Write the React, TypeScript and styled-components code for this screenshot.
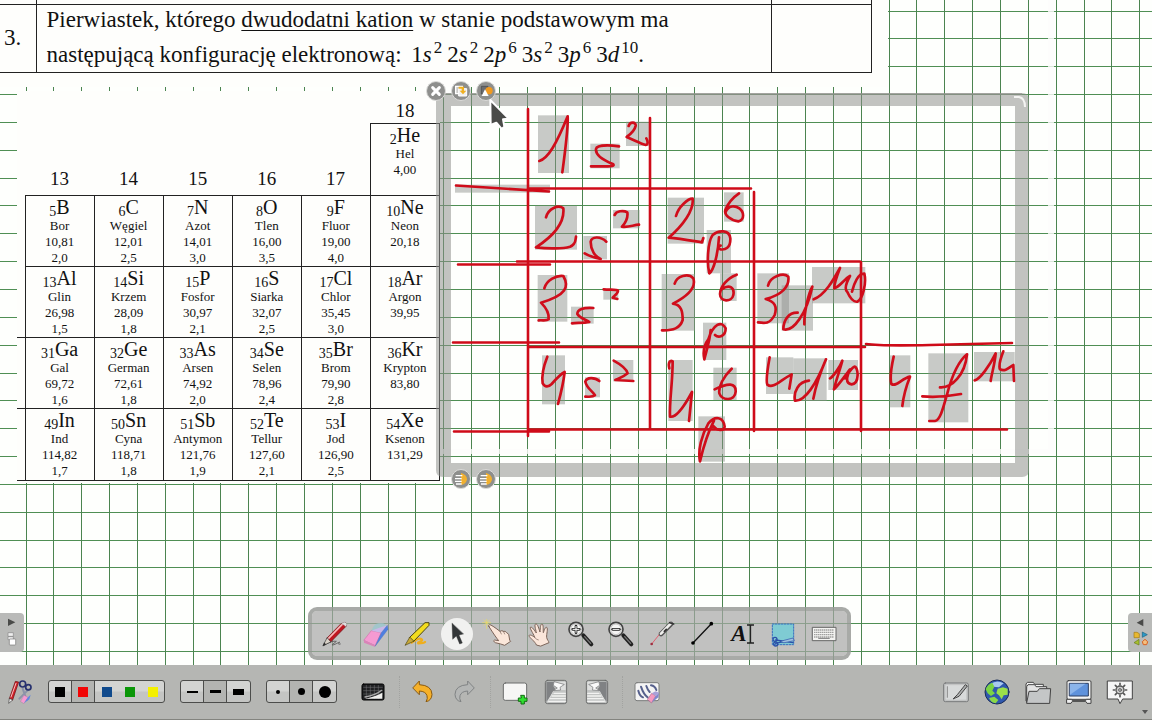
import React from "react";
import styled, { createGlobalStyle, css } from "styled-components";

const GlobalStyle = createGlobalStyle`
  * { box-sizing: border-box; }
  body { margin: 0; background: #fff; font-family: "Liberation Serif", serif; color: #111; }
  button { font: inherit; color: inherit; }
`;

const Page = styled.div`
  display: flex;
  flex-direction: column;
  min-height: 100vh;
`;

/* ---------- whiteboard ---------- */

const Board = styled.main`
  position: relative;
  flex: 1;
  min-height: 500px;
  overflow: hidden;
  background: #fefffd;
`;

const Layer = styled.svg`
  position: absolute;
  top: 0;
  left: 0;
  width: 100%;
  height: 100%;
`;

const GRID = 27.84;
const gridStops = (first: number, count: number) =>
  Array.from({ length: count }, (_, i) => Math.round(first + i * GRID) + 0.5);

const Grid = () => (
  <Layer aria-hidden="true" shapeRendering="crispEdges">
    {gridStops(10.6, 60).map((y) => (
      <line key={y} x1="0" x2="100%" y1={y} y2={y} stroke="#4f8f54" />
    ))}
    {gridStops(25.6, 100).map((x) => (
      <line key={x} y1="0" y2="100%" x1={x} x2={x} stroke="#4b8450" />
    ))}
    <rect x="436" y="449" width="618" height="5" fill="#fdfdfb" opacity="0.8" />
    <rect x="1048" y="0" width="6" height="454" fill="#fdfdfb" opacity="0.8" />
  </Layer>
);

const Sheet = styled.section<{ $x: number; $y: number }>`
  position: absolute;
  left: ${(p) => p.$x}px;
  top: ${(p) => p.$y}px;
  background: #fefefc;
`;

const TaskSheet = styled(Sheet)`
  width: 888px;
  height: 87px;
`;

const TaskTable = styled.table`
  width: 872px;
  border-collapse: collapse;
  font-size: 23px;
  line-height: 30px;
  td {
    border: 1px solid #222;
    border-left-width: 0;
    padding: 0;
  }
  td + td { border-left-width: 1px; }
  tr:first-child td { height: 4px; border-top: 0; }
  tr:last-child td { height: 68px; }
`;

const TaskNumber = styled.td`
  width: 36px;
  text-indent: 4px;
`;

const TaskText = styled.td`
  width: 735px;
  vertical-align: top;
  p { margin: 0 0 5px 10px; white-space: nowrap; }
  p:last-child { margin-bottom: 0; }
  u { text-underline-offset: 3px; text-decoration-thickness: 1px; }
`;

const Formula = styled.span`
  display: inline-flex;
  gap: 5px;
  margin-left: 4px;
  sup {
    font-size: 17px;
    line-height: 0;
    vertical-align: 9px;
    margin-left: 2px;
  }
`;

const ElementsSheet = styled(Sheet)`
  width: 423px;
  height: 392px;
`;

const ElementsTable = styled.table`
  border-collapse: collapse;
  table-layout: fixed;
  width: 423px;
  text-align: center;
  font-size: 13px;
  line-height: 16px;
  td, th { padding: 0; }
`;

const GroupHead = styled.th<{ $last?: boolean }>`
  height: ${(p) => (p.$last ? 32 : 72)}px;
  padding-bottom: ${(p) => (p.$last ? 0 : 4)}px !important;
  vertical-align: bottom;
  font-weight: 400;
  font-size: 19px;
  line-height: 24px;
`;

const ElementCell = styled.td<{ $tall?: boolean }>`
  height: ${(p) => (p.$tall ? 72 : 71)}px;
  border: 1px solid #222;
  vertical-align: top;
  div { white-space: nowrap; }
`;

const Edge = styled.td<{ $line?: boolean }>`
  border-bottom: ${(p) => (p.$line ? "1px solid #222" : "0")};
`;

const Symbol = styled.div`
  font-size: 20px;
  line-height: 22px;
  sub { font-size: 14px; line-height: 0; vertical-align: -2px; }
`;

type El = [number, string, string, string, string?];

const ROWS: El[][] = [
  [[5, "B", "Bor", "10,81", "2,0"], [6, "C", "Węgiel", "12,01", "2,5"], [7, "N", "Azot", "14,01", "3,0"],
   [8, "O", "Tlen", "16,00", "3,5"], [9, "F", "Fluor", "19,00", "4,0"], [10, "Ne", "Neon", "20,18"]],
  [[13, "Al", "Glin", "26,98", "1,5"], [14, "Si", "Krzem", "28,09", "1,8"], [15, "P", "Fosfor", "30,97", "2,1"],
   [16, "S", "Siarka", "32,07", "2,5"], [17, "Cl", "Chlor", "35,45", "3,0"], [18, "Ar", "Argon", "39,95"]],
  [[31, "Ga", "Gal", "69,72", "1,6"], [32, "Ge", "German", "72,61", "1,8"], [33, "As", "Arsen", "74,92", "2,0"],
   [34, "Se", "Selen", "78,96", "2,4"], [35, "Br", "Brom", "79,90", "2,8"], [36, "Kr", "Krypton", "83,80"]],
  [[49, "In", "Ind", "114,82", "1,7"], [50, "Sn", "Cyna", "118,71", "1,8"], [51, "Sb", "Antymon", "121,76", "1,9"],
   [52, "Te", "Tellur", "127,60", "2,1"], [53, "I", "Jod", "126,90", "2,5"], [54, "Xe", "Ksenon", "131,29"]],
];

const Element = ({ el, tall }: { el: El; tall?: boolean }) => (
  <ElementCell $tall={tall}>
    <Symbol><sub>{el[0]}</sub>{el[1]}</Symbol>
    <div>{el[2]}</div>
    <div>{el[3]}</div>
    {el[4] && <div>{el[4]}</div>}
  </ElementCell>
);

const Elements = () => (
  <ElementsSheet $x={17} $y={91} aria-label="Układ okresowy">
    <ElementsTable>
      <colgroup>
        <col style={{ width: 8 }} />
        {[0, 1, 2, 3, 4, 5].map((c) => <col key={c} />)}
      </colgroup>
      <tbody>
        <tr>
          <td colSpan={6} />
          <GroupHead $last>18</GroupHead>
        </tr>
        <tr>
          <td />
          {[13, 14, 15, 16, 17].map((n) => <GroupHead key={n}>{n}</GroupHead>)}
          <Element tall el={[2, "He", "Hel", "4,00"]} />
        </tr>
        {ROWS.map((row, i) => (
          <tr key={i}>
            <Edge $line={i > 0} />
            {row.map((el) => <Element key={el[0]} el={el} tall={i === 3} />)}
          </tr>
        ))}
      </tbody>
    </ElementsTable>
  </ElementsSheet>
);

/* ---------- handwriting ---------- */

type Block = { at: [number, number]; boxes: [number, number, number, number][]; strokes: string[] };

/* Each block is written in thirds of a pixel around its own origin. */
const INK: Block[] = [
  {
    at: [420, 75],
    boxes: [[354, 121, 93, 173], [511, 206, 88, 74], [618, 140, 72, 73], [105, 329, 285, 24], [345, 392, 126, 132], [490, 483, 71, 70], [579, 405, 80, 55]],
    strokes: [
      "M358 258C385 250 410 205 443 124C445 150 438 210 427 292",
      "M597 214C565 210 530 210 528 222C526 240 545 252 580 268C585 276 560 274 513 274",
      "M626 153C630 140 648 140 647 152C644 168 630 178 620 186C645 196 660 205 675 209C684 212 685 200 679 190",
      "M378 427C385 400 415 388 430 400C434 440 405 480 348 517C385 522 430 521 450 515C468 508 466 495 468 485",
      "M559 500C540 482 515 485 512 500C512 525 525 545 542 552C525 548 505 542 494 535",
      "M584 420C588 408 610 405 622 412C625 432 615 445 606 455C625 458 640 450 657 449",
    ],
  },
  {
    at: [640, 170],
    boxes: [[83, 83, 109, 138], [252, 67, 59, 88], [200, 180, 73, 130], [65, 312, 100, 170], [240, 310, 50, 83], [352, 310, 95, 150], [425, 346, 94, 136], [516, 291, 160, 109]],
    strokes: [
      "M108 138C115 110 145 85 158 86C162 120 130 165 86 203C120 206 160 213 186 217L190 204",
      "M297 70C275 85 262 105 256 120C252 135 270 150 295 154C315 150 312 125 298 115C285 106 265 105 256 128",
      "M237 202C234 250 222 300 208 310C200 280 203 215 218 195C235 180 268 178 271 205C272 235 255 240 242 238C232 236 234 228 242 227",
      "M104 341C110 318 145 308 160 325C168 350 150 375 99 401C125 405 128 425 128 450C120 475 100 482 66 481",
      "M290 314C260 325 242 350 240 372C240 396 275 398 280 375C284 355 270 340 245 358",
      "M384 347C390 320 430 306 445 320C449 350 425 375 377 387C405 395 412 410 404 435C390 462 375 460 354 457",
      "M473 428C445 427 430 452 430 478C460 487 500 430 517 350C505 370 492 430 493 463",
      "M521 388C555 375 580 330 600 294C590 320 582 345 583 355C600 350 612 328 630 318C615 345 615 360 622 366",
      "M622 366C632 388 640 397 652 395C668 388 680 340 673 311C655 310 642 340 636 365",
    ],
  },
  {
    at: [440, 250],
    boxes: [[293, 75, 89, 140], [393, 170, 68, 51], [490, 117, 45, 32], [306, 316, 69, 147], [435, 382, 45, 60], [519, 330, 61, 64], [685, 330, 73, 183]],
    strokes: [
      "M313 115C320 90 350 75 370 78C388 110 380 135 303 158C320 175 328 190 326 208C320 213 310 210 296 211",
      "M460 174C430 172 412 178 412 192C420 205 440 210 448 216C430 220 410 218 396 220",
      "M491 118C510 120 530 118 534 122C534 132 520 138 518 143L532 147",
      "M322 320C310 350 305 380 308 400C315 412 325 412 335 402C350 385 362 372 374 366C370 400 360 440 354 462",
      "M478 393C465 382 440 380 436 395C440 415 460 425 465 436C458 442 450 440 436 440",
      "M521 332C545 345 560 360 563 370C545 385 535 385 526 390L580 393",
      "M688 355C683 335 692 330 698 334C698 400 688 450 690 500C710 505 735 465 756 426L747 513",
    ],
  },
  {
    at: [680, 250],
    boxes: [[69, 218, 70, 112], [100, 353, 70, 97], [55, 499, 80, 136], [258, 322, 82, 110], [340, 325, 100, 128], [445, 330, 89, 90], [629, 316, 62, 156], [745, 310, 120, 207], [882, 306, 122, 88]],
    strokes: [
      "M92 240C90 270 80 300 73 328C68 305 72 285 85 268C100 222 125 210 137 235C137 260 115 265 105 255",
      "M155 356C130 380 115 410 118 430C125 452 165 455 167 425C168 398 145 398 104 418",
      "M102 512C85 545 68 600 60 634C53 600 65 555 85 520C105 496 130 500 134 530C132 545 110 542 100 528",
      "M269 322C262 360 258 395 262 404C280 418 300 390 335 373L328 416",
      "M387 392C355 395 340 425 345 452C375 455 410 400 438 328C420 370 405 420 400 446",
      "M450 385C460 380 480 350 487 332C480 360 465 400 462 418C480 400 500 370 510 358C500 380 495 400 515 403C540 400 535 350 523 350C513 354 505 370 495 385",
      "M641 320C632 360 630 385 634 402C650 412 665 385 690 380C680 405 670 440 667 468",
      "M780 412C815 415 855 375 861 313C840 330 818 370 802 430C788 480 780 510 765 513L748 513",
      "M727 439C760 442 800 440 843 432",
      "M884 391C900 388 930 345 947 310C945 340 935 370 932 393",
      "M970 304C960 330 956 350 960 358C975 365 985 355 1000 345L1002 393",
    ],
  },
];

const RULES = [
  "M528 109V436", "M650 118V429", "M754 192V431", "M861 262V431",
  "M528 188.500H751", "M456 185.500L549 191.500", "M517 261.500H860", "M458 264.500H550",
  "M453 342.500H559", "M528 347H865", "M866 344Q880 346 930 345L1012 343",
  "M528 429.500H1007", "M454 431.500H549",
];

const Ink = () => (
  <Layer aria-label="Odręczna konfiguracja elektronowa" role="img">
    {/* selection frame */}
    <path
      d="M443.500 93H1022Q1029 93 1029 100V470Q1029 477 1022 477H443Q436 477 436 470V100Q436 93 443.500 93ZM451 106V463H1015V106Z"
      fill="#8f918c"
      fillOpacity="0.54"
    />
    <path d="M443 94H1022" stroke="#8f918c" strokeWidth="2" opacity="0.6" />
    <path d="M1014 97H1019Q1025 98 1025 107" fill="none" stroke="#f4f4f2" strokeWidth="2" />
    {INK.map((b, i) => (
      <g key={i} transform={`translate(${b.at[0]} ${b.at[1]}) scale(0.33333)`} fill="#8f918c" fillOpacity="0.48">
        {b.boxes.map(([x, y, w, h]) => <rect key={x + "-" + y} x={x} y={y} width={w} height={h} />)}
      </g>
    ))}
    <path d={RULES.join("")} fill="none" stroke="#cf0b19" strokeWidth="2.600" strokeLinecap="round" />
    {INK.map((b, i) => (
      <path
        key={i}
        transform={`translate(${b.at[0]} ${b.at[1]}) scale(0.33333)`}
        d={b.strokes.join("")}
        fill="none"
        stroke="#d00d1b"
        strokeWidth="8"
        strokeLinecap="round"
        strokeLinejoin="round"
      />
    ))}
  </Layer>
);

const Handle = styled.button<{ $x: number; $y: number }>`
  position: absolute;
  left: ${(p) => p.$x}px;
  top: ${(p) => p.$y}px;
  width: 20px;
  height: 20px;
  padding: 0;
  border: 1px solid #dcdcda;
  border-radius: 50%;
  background: #8e8f8d;
  svg { display: block; width: 18px; height: 18px; }
`;

const LinesGlyph = () => (
  <svg viewBox="0 0 54 54">
    <path d="M27 9Q45 14 45 28Q44 42 27 45Z" fill="#f0b030" />
    <path d="M11 17H31M9 26H29M9 34H29M12 42H29" stroke="#fff" strokeWidth="4" />
  </svg>
);

const Pointer = styled.svg`
  position: absolute;
  left: 486px;
  top: 96px;
  width: 26px;
  height: 38px;
`;

/* ---------- icons ---------- */

const Svg = styled.svg<{ $size?: number }>`
  display: block;
  flex: none;
  width: ${(p) => p.$size ?? 32}px;
  height: ${(p) => p.$size ?? 32}px;
`;

const Icon = ({ children }: { children: React.ReactNode }) => (
  <Svg viewBox="-48 -48 96 96" aria-hidden="true" strokeLinecap="round" strokeLinejoin="round">{children}</Svg>
);

const PenIcon = () => (
  <Icon>
    <path d="M-32 33C-15 24 -5 20 4 22C-2 28 -14 34 -6 33C4 30 8 26 14 24C10 30 8 32 16 30" fill="none" stroke="#555" strokeWidth="2.500" />
    <path d="M-24 12L18 -31L32 -34L34 -24L-13 24Z" fill="#c01520" stroke="#6b1015" strokeWidth="2" />
    <path d="M-20 14L24 -31" stroke="#f4b8b8" strokeWidth="5" />
    <path d="M-24 12L-36 35L-13 24Z" fill="#d9d2c8" stroke="#333" strokeWidth="2" />
    <path d="M-36 35L-32 26L-28 31Z" fill="#222" stroke="#222" />
    <path d="M20 -32L30 -36L36 -30L33 -22Z" fill="#ddd" stroke="#777" />
  </Icon>
);

const EraserIcon = () => (
  <Icon>
    <path d="M-14 -10Q-6 -36 14 -32Q28 -34 30 -24L14 -8Z" fill="#9fc6cc" opacity="0.9" />
    <path d="M-36 18L-14 -10L16 -4L-2 34Z" fill="#f59ad2" stroke="#d273ad" strokeWidth="2" />
    <path d="M-36 18L-2 34L-4 38L-36 26Z" fill="#d984b8" />
    <path d="M-14 -10L8 -18L34 -26L16 -4Z" fill="#c9b8e8" />
    <path d="M16 -4L34 -26L36 -14L-2 36Z" fill="#4f7fe0" stroke="#4468b8" strokeWidth="1" />
  </Icon>
);

const MarkerIcon = () => (
  <Icon>
    <path d="M-16 26C0 14 10 12 14 16C20 22 0 24 4 28C12 28 20 28 24 24" fill="none" stroke="#efae1c" strokeWidth="7" />
    <path d="M-22 10L24 -34L36 -34L36 -26L-10 22Z" fill="#f3dc1e" stroke="#4b4410" strokeWidth="3" />
    <path d="M-22 10L-36 34L-10 22Z" fill="#c9a838" stroke="#4b4410" strokeWidth="2" />
  </Icon>
);

const ArrowIcon = () => (
  <Icon>
    <path d="M-15 -32L-13 16L-2 6L8 30L16 27L6 3L19 0Z" fill="#333638" stroke="#222" strokeWidth="1" />
  </Icon>
);

const FingerIcon = () => (
  <Icon>
    <path d="M-34 -44V-16M-46 -34H-22M-42 -42L-26 -26M-26 -42L-42 -26" stroke="#ecdc62" strokeWidth="2" />
    <path d="M-27 -22Q-31 -27 -25 -28Q-20 -28 6 -8Q12 -12 16 -8Q22 -10 26 -4Q34 -2 34 12Q34 20 38 22L20 34Q10 30 -8 26Q-18 20 -10 18L2 20Q-8 8 -27 -22Z" fill="#fbe6da" stroke="#7c6459" strokeWidth="3" />
    <path d="M6 -8L10 0M16 -8L20 0" stroke="#7c6459" strokeWidth="2" />
  </Icon>
);

const HandIcon = () => (
  <Icon>
    <path d="M-8 32C-12 22 -30 10 -30 5C-28 0 -18 6 -13 10C-18 -4 -28 -16 -26 -20C-21 -24 -12 -8 -8 -3C-10 -16 -15 -28 -10 -30C-4 -32 0 -14 3 -6C4 -18 4 -30 9 -30C14 -29 12 -12 13 -4C16 -12 19 -22 23 -20C28 -16 22 0 23 10C24 18 30 22 30 26L6 36Z" fill="#fbe6da" stroke="#7c6459" strokeWidth="3" />
    <path d="M-13 10Q-8 18 -2 18" fill="none" stroke="#7c6459" strokeWidth="2" />
  </Icon>
);

const ZoomIcon = ({ plus }: { plus?: boolean }) => (
  <Icon>
    <path d="M10 4L34 31" stroke="#222" strokeWidth="12" />
    <path d="M14 8L32 28" stroke="#777" strokeWidth="4" />
    <circle cx="-12" cy="-14" r="21" fill="#f5f5f4" stroke="#444" strokeWidth="5" />
    <circle cx="-12" cy="-14" r="16" fill="none" stroke="#aaa" strokeWidth="2" />
    <path d={plus ? "M-22 -14H-2M-12 -24V-4" : "M-22 -14H-2"} stroke="#222" strokeWidth="8" />
    <path d={plus ? "M-21 -14H-3M-12 -23V-5" : "M-21 -14H-3"} stroke="#fff" strokeWidth="3" />
  </Icon>
);

const LaserIcon = () => (
  <Icon>
    <path d="M-28 30L-4 0" stroke="#e06070" strokeWidth="3" />
    <circle cx="-28" cy="30" r="4" fill="#a03040" />
    <path d="M0 0L30 -30" stroke="#555" strokeWidth="14" />
    <path d="M0 -1L29 -31" stroke="#f0f0ee" strokeWidth="8" />
    <path d="M10 -8L16 -14M26 -34L38 -30" stroke="#333" strokeWidth="5" />
  </Icon>
);

const LineIcon = () => (
  <Icon>
    <path d="M-27 27L28 -31" stroke="#111" strokeWidth="4" />
    <circle cx="-27" cy="27" r="5.500" /><circle cx="28" cy="-31" r="5.500" />
  </Icon>
);

const TextMark = styled.span`
  display: flex;
  align-items: center;
  justify-content: center;
  width: 32px;
  font: italic bold 23px/28px "Liberation Serif", serif;
  color: #111;
  svg { width: 7px; height: 20px; }
`;

const CropIcon = () => (
  <Icon>
    <rect x="-32" y="-30" width="64" height="62" fill="#7fcbd3" stroke="#356fc0" strokeWidth="3" strokeDasharray="5 4" />
    <path d="M-22 18L30 26M-22 28L4 22" stroke="#2b4fa8" strokeWidth="4" />
    <path d="M-8 22L30 12L34 20L4 26Z" fill="#9fc2e0" stroke="#2b4fa8" strokeWidth="2" />
    <circle cx="-24" cy="16" r="6" fill="none" stroke="#2b4fa8" strokeWidth="4" />
    <circle cx="-22" cy="30" r="6" fill="none" stroke="#2b4fa8" strokeWidth="4" />
  </Icon>
);

const KeyboardIcon = () => (
  <Icon>
    <rect x="-34" y="-20" width="70" height="40" fill="#f3f3f1" stroke="#666" strokeWidth="3" />
    <path d="M-29 -12H31M-29 -5H31M-29 2H31M-29 9H31" stroke="#777" strokeWidth="4" strokeDasharray="3 3" strokeLinecap="butt" />
    <path d="M-16 13H16" stroke="#777" strokeWidth="3" />
  </Icon>
);

const ToolsIcon = () => (
  <Icon>
    <path d="M8 -10L20 24M26 -8L-2 20" stroke="#8b93a8" strokeWidth="6" />
    <circle cx="8" cy="-24" r="9" fill="none" stroke="#26306e" strokeWidth="5" />
    <circle cx="25" cy="-14" r="8" fill="none" stroke="#26306e" strokeWidth="5" />
    <path d="M-32 20L-14 -32L-4 -30L-22 24Z" fill="#cf1f28" stroke="#6b1015" strokeWidth="2" />
    <path d="M-27 15L-12 -26" stroke="#f4c0c0" strokeWidth="3" />
    <path d="M-32 20L-34 34L-22 24Z" fill="#eee" stroke="#444" strokeWidth="2" />
    <path d="M2 28L12 10L24 16L12 34Z" fill="#f59ad2" stroke="#b568a0" strokeWidth="1" />
    <path d="M24 16L32 8L28 22L12 34Z" fill="#5f86e0" />
  </Icon>
);

const BackgroundIcon = () => (
  <Icon>
    <rect x="-33" y="-24" width="66" height="48" rx="5" fill="#1f2022" stroke="#000" strokeWidth="3" />
    <path d="M-28 -14H28M-28 -4H28M-28 6H28M-20 -20V20M-8 -20V20M4 -20V20M16 -20V20" stroke="#77797a" strokeWidth="1.500" />
    <path d="M-24 20Q10 12 28 2V20Z" fill="#f0f0ee" />
    <path d="M-24 15Q8 10 26 -5" fill="none" stroke="#aaa" strokeWidth="4" />
  </Icon>
);

const UndoIcon = ({ redo }: { redo?: boolean }) => (
  <Icon>
    <path
      transform={redo ? "scale(-1 1)" : undefined}
      d="M-30 -13L-11 -33L-11 -22Q26 -20 27 7Q26 26 9 29Q15 20 12 11Q8 -2 -11 -3L-11 7Z"
      fill={redo ? "#b4b6b5" : "#f6b12a"}
      stroke={redo ? "#808384" : "#8a5a10"}
      strokeWidth="3"
    />
  </Icon>
);

const NewPageIcon = () => (
  <Icon>
    <rect x="-35" y="-27" width="70" height="52" rx="6" fill="#f6f6f5" stroke="#6b6d6c" strokeWidth="3" />
    <path d="M18 10H28V18H36V28H28V36H18V28H10V18H18Z" fill="#2fe02f" stroke="#136d13" strokeWidth="3" />
  </Icon>
);

const TurnIcon = ({ next }: { next?: boolean }) => (
  <Icon>
    <g transform={next ? "scale(-1 1)" : undefined}>
      <rect x="-32" y="-35" width="64" height="70" rx="7" fill="#c2c4c3" stroke="#6b6d6c" strokeWidth="3" />
      <path d="M-29 -31H-4L-8 -18L-2 -8L-29 30Z" fill="#808284" />
      <path d="M-6 -31H29V-6H-4L-22 26L-28 32L-8 -4L4 -12L-8 -20Z" fill="#dfe0df" />
      <path d="M-6 -30L-8 -20L4 -12L-8 -4L14 -6L12 -14L24 -22Z" fill="#fafafa" stroke="#6f7173" strokeWidth="2" />
      <path d="M-6 4H28M-12 12H28M-17 20H28M-22 28H28" stroke="#f2f2f1" strokeWidth="4" />
    </g>
  </Icon>
);

const ClearIcon = () => (
  <Icon>
    <rect x="-36" y="-28" width="72" height="54" rx="6" fill="#f4f4f4" stroke="#7a7c7b" strokeWidth="3" />
    <path d="M-26 -4Q-22 12 -12 16M-18 -16Q-10 8 2 16M-2 -18Q2 -6 8 0M12 -20Q24 -18 28 -6" fill="none" stroke="#56608c" strokeWidth="6" />
    <path d="M2 22L14 4L26 12L14 32Z" fill="#f59ac0" stroke="#b5688c" strokeWidth="2" />
    <path d="M26 12L36 2L34 16L14 32Z" fill="#7f86cc" />
    <path d="M14 4L26 -2L36 2L26 12Z" fill="#a8a0d8" />
  </Icon>
);

const BoardIcon = () => (
  <Icon>
    <rect x="-37" y="-27" width="74" height="56" rx="5" fill="#c6c8c8" stroke="#77797a" strokeWidth="3" />
    <rect x="-32" y="-22" width="64" height="46" fill="#d8dada" stroke="#aaa" strokeWidth="1" />
    <path d="M-26 -16V16" stroke="#888" strokeWidth="3" />
    <path d="M-8 20L4 8L28 -22L34 -18L10 12Z" fill="#aeb0b0" stroke="#444" strokeWidth="3" />
  </Icon>
);

const GlobeIcon = () => (
  <Icon>
    <circle r="36" fill="#2f58ae" stroke="#1a2c56" strokeWidth="3" />
    <path d="M-20 -24Q0 -38 20 -26L6 -14L-12 -16Z" fill="#a9c9ee" />
    <path d="M-34 -8Q-28 -24 -14 -28L-8 -16L-14 -4L-6 4L-18 12L-28 4Z" fill="#7bd444" />
    <path d="M2 -10L18 -14L32 -10L32 8L20 10L14 22L6 10L-2 4Z" fill="#9ae04a" />
    <path d="M-24 18L-8 14L4 24L-4 34Q-18 32 -24 18Z" fill="#8ad848" />
  </Icon>
);

const FolderIcon = () => (
  <Icon>
    <path d="M-36 26V-24L-32 -29H-14L-10 -23H16V26Z" fill="#f4f4f4" stroke="#444" strokeWidth="3" />
    <path d="M-34 30V-16L-30 -22H-10L-6 -16H26V28Z" fill="#e4e4e4" stroke="#444" strokeWidth="3" />
    <path d="M-34 33L-27 -2H-2L4 -10H38L35 33Z" fill="#c4c6c7" stroke="#444" strokeWidth="3" />
  </Icon>
);

const ScreenIcon = () => (
  <Icon>
    <rect x="-36" y="-34" width="72" height="56" rx="4" fill="#f4f4f4" stroke="#444" strokeWidth="3" />
    <rect x="-28" y="-26" width="56" height="38" fill="#5f92dc" stroke="#2a3c60" strokeWidth="3" />
    <path d="M-27 -25H20L-27 8Z" fill="#8bb4ea" />
    <path d="M-36 22H-22L-20 26H20L22 22H36V34H24L20 28H-20L-24 34H-36Z" fill="#f0f0f0" stroke="#444" strokeWidth="3" />
  </Icon>
);

const SettingsIcon = () => (
  <Icon>
    <path d="M-37 -33H37V21H8L0 35L-6 21H-37Z" fill="#f6f6f6" stroke="#444" strokeWidth="3" />
    <circle cy="-6" r="12" fill="#ccc" stroke="#555" strokeWidth="4" />
    <circle cy="-6" r="4" fill="#f6f6f6" stroke="#555" strokeWidth="3" />
    <path d="M0 -22V-26M0 10V14M-16 -6H-20M16 -6H20M-11 -17L-14 -20M11 -17L14 -20M-11 5L-14 8M11 5L14 8" stroke="#555" strokeWidth="5" />
  </Icon>
);

/* ---------- floating palette and side tabs ---------- */

const Palette = styled.nav`
  position: absolute;
  bottom: 5px;
  left: 50%;
  margin-left: -268px;
  width: 543px;
  height: 53px;
  padding: 0 7px;
  display: flex;
  align-items: center;
  justify-content: space-between;
  border: 4px solid rgba(154, 156, 153, 0.86);
  border-radius: 9px;
  background: rgba(166, 167, 165, 0.7);
  background-clip: padding-box;
`;

const ToolButton = styled.button<{ $active?: boolean }>`
  display: flex;
  align-items: center;
  justify-content: center;
  width: 32px;
  height: 32px;
  padding: 0;
  border: 0;
  border-radius: 50%;
  background: ${(p) => (p.$active ? "#f1f1f0" : "transparent")};
`;

const SideTab = styled.button<{ $right?: boolean }>`
  position: absolute;
  bottom: 13px;
  width: 24px;
  height: 39px;
  padding: 0;
  border: 0;
  background: #b9bab8;
  ${(p) => p.$right
    ? css`right: 0; border-radius: 4px 0 0 4px;`
    : css`left: 0; border-radius: 0 4px 4px 0;`}
  svg { display: block; width: 24px; height: 39px; }
`;

/* ---------- bottom bar ---------- */

const BottomBar = styled.footer`
  display: flex;
  align-items: center;
  height: 55px;
  padding: 0 16px 1px 4px;
  background: #b5b6b3;
  border-bottom: 1px solid #83847f;
  position: relative;
`;

const Cluster = styled.div<{ $gap?: number; $before?: number }>`
  display: flex;
  align-items: center;
  gap: ${(p) => p.$gap ?? 9}px;
  margin-left: ${(p) => p.$before ?? 0}px;
`;

const Spacer = styled.div`
  flex: 1;
`;

const Divider = styled.span<{ $before: number }>`
  margin-left: ${(p) => p.$before}px;
  height: 32px;
  border-left: 1px dotted #a2a3a0;
`;

const Segment = styled.div`
  display: flex;
  height: 23px;
  border: 1px solid #4c4d4b;
  border-radius: 3px;
  overflow: hidden;
  background: linear-gradient(#d3d4d2 0 48%, #c4c5c3 52% 100%);
`;

const SegmentButton = styled.button<{ $active?: boolean; $line?: boolean }>`
  display: flex;
  align-items: center;
  justify-content: center;
  width: 23px;
  padding: 0;
  border: 0;
  border-right: ${(p) => (p.$line ? "1px solid #4c4d4b" : "0")};
  background: ${(p) => (p.$active ? "#b3b4b1" : "transparent")};
`;

const Mark = styled.span<{ $w: number; $h: number; $color?: string; $round?: boolean }>`
  width: ${(p) => p.$w}px;
  height: ${(p) => p.$h}px;
  background: ${(p) => p.$color ?? "#000"};
  border-radius: ${(p) => (p.$round ? "50%" : "0")};
`;

const More = styled.svg`
  position: absolute;
  right: 4px;
  bottom: 5px;
  width: 6px;
  height: 4px;
`;

const COLORS: [string, string][] = [
  ["Czarny", "#000"], ["Czerwony", "#f20505"], ["Niebieski", "#104a8c"], ["Zielony", "#0a9608"], ["Żółty", "#f4f000"],
];
const WIDTHS: [string, number, number][] = [["Cienka", 11, 2], ["Średnia", 11, 3], ["Gruba", 11, 6]];
const DOTS: [string, number][] = [["Mała", 4], ["Średnia", 7], ["Duża", 12]];

const TOOLS: [string, React.ReactNode][] = [
  ["Pióro", <PenIcon />], ["Gumka", <EraserIcon />], ["Zakreślacz", <MarkerIcon />], ["Zaznacz", <ArrowIcon />],
  ["Interakcja", <FingerIcon />], ["Przewiń", <HandIcon />], ["Powiększ", <ZoomIcon plus />], ["Pomniejsz", <ZoomIcon />],
  ["Wskaźnik", <LaserIcon />], ["Linia", <LineIcon />],
  ["Tekst", (
    <TextMark>
      A
      <svg viewBox="0 0 7 20" aria-hidden="true">
        <path d="M0 1H3L3.500 2L4 1H7M3.500 2V18M0 19H3L3.500 18L4 19H7" fill="none" stroke="#222" strokeWidth="1.300" />
      </svg>
    </TextMark>
  )],
  ["Wytnij", <CropIcon />], ["Klawiatura", <KeyboardIcon />],
];

export default function App() {
  return (
    <Page>
      <GlobalStyle />
      <Board>
        <Grid />
        <TaskSheet $x={0} $y={0}>
          <TaskTable>
            <tbody>
              <tr><td /><td /><td /></tr>
              <tr>
                <TaskNumber>3.</TaskNumber>
                <TaskText>
                  <p>Pierwiastek, którego <u>dwudodatni kation</u> w stanie podstawowym ma</p>
                  <p>
                    następującą konfigurację elektronową:{" "}
                    <Formula>
                      <span>1<i>s</i><sup>2</sup></span>
                      <span>2<i>s</i><sup>2</sup></span>
                      <span>2<i>p</i><sup>6</sup></span>
                      <span>3<i>s</i><sup>2</sup></span>
                      <span>3<i>p</i><sup>6</sup></span>
                      <span>3<i>d</i><sup>10</sup>.</span>
                    </Formula>
                  </p>
                </TaskText>
                <td />
              </tr>
            </tbody>
          </TaskTable>
        </TaskSheet>
        <Elements />
        <Ink />

        <Handle $x={426} $y={81} aria-label="Zamknij">
          <svg viewBox="0 0 54 54"><path d="M17 17L37 37M37 17L17 37" stroke="#fff" strokeWidth="9" strokeLinecap="round" /></svg>
        </Handle>
        <Handle $x={451} $y={81} aria-label="Duplikuj">
          <svg viewBox="0 0 54 54">
            <path d="M11 13H31V35H11Z" fill="#c9c9c7" stroke="#fff" strokeWidth="4" />
            <path d="M20 20H44V42H20Z" fill="#eee" stroke="#fff" strokeWidth="3" />
            <path d="M20 14H36V26H43L33 37L23 26H29V20H20Z" fill="#f0b020" />
          </svg>
        </Handle>
        <Handle $x={476} $y={81} aria-label="Menu obiektu">
          <svg viewBox="0 0 54 54">
            <path d="M13 13H33V36H13Z" fill="#6a6c70" stroke="#444" strokeWidth="2" />
            <circle cx="36" cy="26" r="11" fill="#f09a20" />
            <path d="M14 42L24 22L35 42Z" fill="#fff" />
          </svg>
        </Handle>
        <Handle $x={451} $y={469} aria-label="W górę"><LinesGlyph /></Handle>
        <Handle $x={476} $y={469} aria-label="W dół"><LinesGlyph /></Handle>

        <Pointer viewBox="0 0 78 114" aria-hidden="true">
          <path d="M13 12L14 87L31 80L47 99L55 92L51 70L68 68Z" fill="#4a4b49" stroke="#fff" strokeWidth="6" strokeLinejoin="round" />
        </Pointer>

        <SideTab aria-label="Pokaż strony">
          <svg viewBox="0 0 72 117">
            <path d="M24 17L46 28L24 39Z" fill="#4a4b49" />
            <path d="M24 59H40V70H24ZM24 71H40V80H24Z" fill="#eee" stroke="#888" strokeWidth="2" />
            <rect x="28" y="78" width="19" height="18" rx="2" fill="#fff" stroke="#777" strokeWidth="2" />
          </svg>
        </SideTab>
        <SideTab $right aria-label="Pokaż bibliotekę">
          <svg viewBox="0 0 72 117">
            <path d="M46 18L26 29L46 40Z" fill="#4a4b49" />
            <path d="M18 58H27L34 62V74H18Z" fill="#e8b830" stroke="#a07818" strokeWidth="2" />
            <path d="M43 57L58 65L43 73Z" fill="#2a9ac8" stroke="#1a6080" strokeWidth="2" />
            <path d="M33 79V96L18 89Z" fill="#a8c030" stroke="#687818" strokeWidth="2" />
            <path d="M51 79L59 86L56 95H46L43 86Z" fill="#f4c080" stroke="#d86020" strokeWidth="3" />
          </svg>
        </SideTab>

        <Palette aria-label="Narzędzia">
          {TOOLS.map(([name, icon]) => (
            <ToolButton key={name} aria-label={name} $active={name === "Zaznacz"}>{icon}</ToolButton>
          ))}
        </Palette>
      </Board>

      <BottomBar>
        <ToolButton aria-label="Narzędzia"><ToolsIcon /></ToolButton>
        <Cluster $before={12} $gap={15}>
          <Segment>
            {COLORS.map(([name, color], i) => (
              <SegmentButton key={name} aria-label={name} $line={i < 2} $active={i === 1}>
                <Mark $w={10} $h={10} $color={color} />
              </SegmentButton>
            ))}
          </Segment>
          <Segment>
            {WIDTHS.map(([name, w, h], i) => (
              <SegmentButton key={name} aria-label={name} $line={i < 2} $active={i === 1}>
                <Mark $w={w} $h={h} />
              </SegmentButton>
            ))}
          </Segment>
          <Segment>
            {DOTS.map(([name, d], i) => (
              <SegmentButton key={name} aria-label={name} $line={i < 2} $active={i === 1}>
                <Mark $w={d} $h={d} $round />
              </SegmentButton>
            ))}
          </Segment>
        </Cluster>
        <Cluster $before={20}>
          <ToolButton aria-label="Tło"><BackgroundIcon /></ToolButton>
        </Cluster>
        <Divider $before={10} />
        <Cluster $before={7}>
          <ToolButton aria-label="Cofnij"><UndoIcon /></ToolButton>
          <ToolButton aria-label="Ponów"><UndoIcon redo /></ToolButton>
        </Cluster>
        <Divider $before={10} />
        <Cluster $before={8}>
          <ToolButton aria-label="Nowa strona"><NewPageIcon /></ToolButton>
          <ToolButton aria-label="Poprzednia strona"><TurnIcon /></ToolButton>
          <ToolButton aria-label="Następna strona"><TurnIcon next /></ToolButton>
        </Cluster>
        <Divider $before={9} />
        <Cluster $before={8}>
          <ToolButton aria-label="Wyczyść stronę"><ClearIcon /></ToolButton>
        </Cluster>
        <Spacer />
        <Cluster>
          <ToolButton aria-label="Tablica"><BoardIcon /></ToolButton>
          <ToolButton aria-label="Internet"><GlobeIcon /></ToolButton>
          <ToolButton aria-label="Dokumenty"><FolderIcon /></ToolButton>
          <ToolButton aria-label="Pulpit"><ScreenIcon /></ToolButton>
          <ToolButton aria-label="Ustawienia"><SettingsIcon /></ToolButton>
        </Cluster>
        <More viewBox="0 0 6 4" aria-hidden="true"><path d="M0 0H6L3 4Z" fill="#555" /></More>
      </BottomBar>
    </Page>
  );
}
